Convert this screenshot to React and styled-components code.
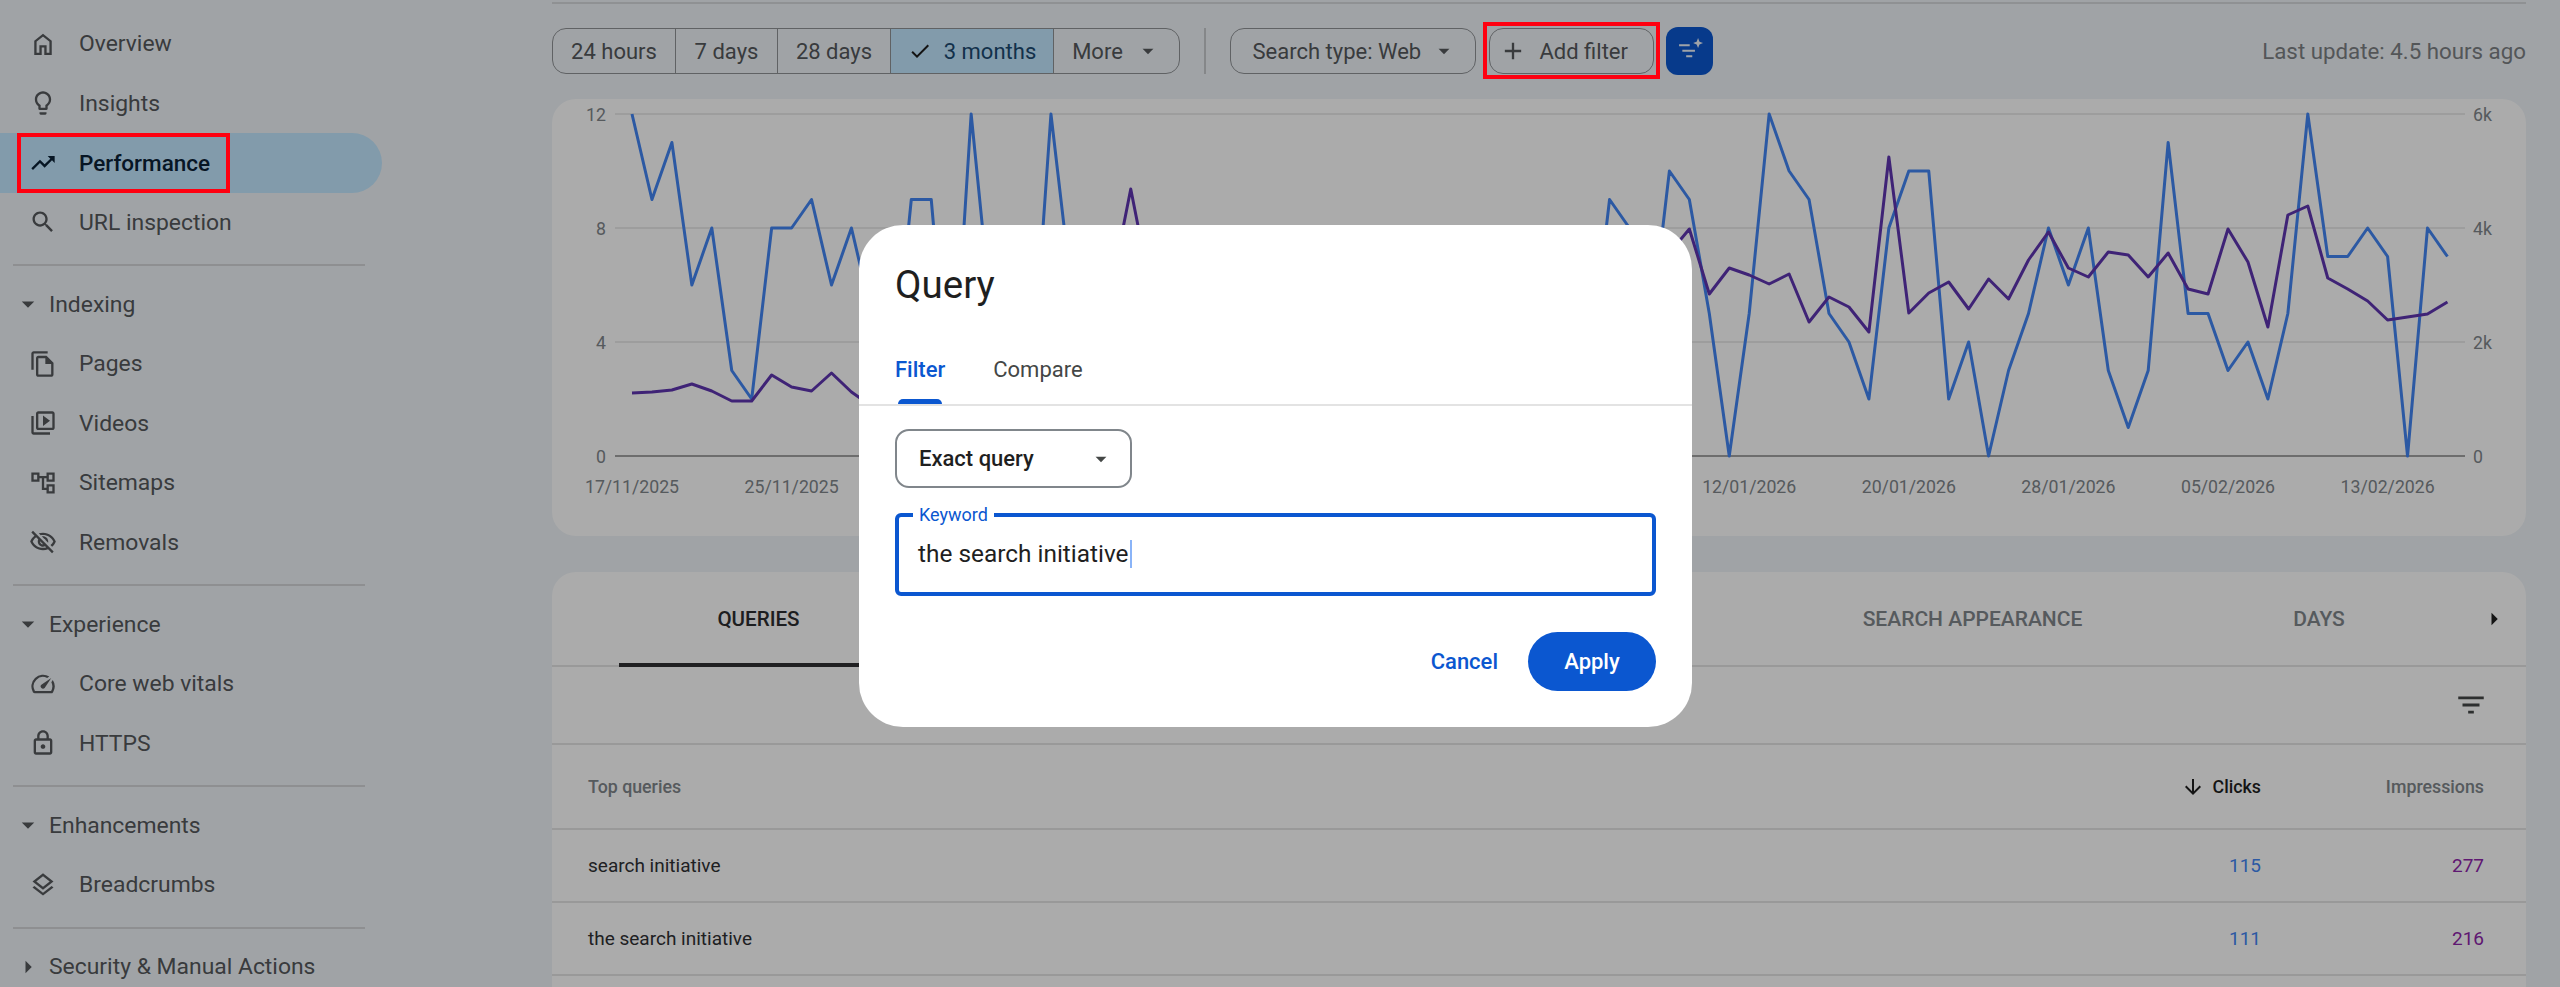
import React from 'react';
import styled, { createGlobalStyle } from 'styled-components';

const GlobalStyle = createGlobalStyle`
  html, body {
    margin: 0;
    padding: 0;
    height: 987px;
    overflow: hidden;
    background: #eff4f8;
    font-family: Roboto, "Noto Sans", sans-serif;
  }
  * {
    box-sizing: border-box;
  }
`;

const ICONS = {
  home: <path d="M5.5 20.5V9.6L12 4.4l6.5 5.2v10.9h-4.4V14H9.9v6.5z" fill="none" stroke="currentColor" strokeWidth="2" />,
  bulb: <path d="M9 21c0 .5.4 1 1 1h4c.6 0 1-.5 1-1v-1H9v1zm3-19C8.1 2 5 5.1 5 9c0 2.4 1.2 4.5 3 5.7V17c0 .5.4 1 1 1h6c.6 0 1-.5 1-1v-2.3c1.8-1.3 3-3.4 3-5.7 0-3.9-3.1-7-7-7zm2.9 11.1l-.9.6V16h-4v-2.3l-.9-.6C7.8 12.2 7 10.6 7 9c0-2.8 2.2-5 5-5s5 2.2 5 5c0 1.6-.8 3.2-2.1 4.1z" />,
  trend: <path d="M16 6l2.29 2.29-4.88 4.88-4-4L2 16.59 3.41 18l6-6 4 4 6.3-6.29L22 12V6z" />,
  search: <path d="M15.5 14h-.79l-.28-.27C15.41 12.59 16 11.11 16 9.5 16 5.91 13.09 3 9.5 3S3 5.91 3 9.5 5.91 16 9.5 16c1.61 0 3.09-.59 4.23-1.57l.27.28v.79l5 4.99L20.49 19l-4.99-5zm-6 0C7.01 14 5 11.99 5 9.5S7.01 5 9.5 5 14 7.01 14 9.5 11.99 14 9.5 14z" />,
  pages: <path d="M16 1H4c-1.1 0-2 .9-2 2v14h2V3h12V1zm-1 4H8c-1.1 0-1.99.9-1.99 2L6 21c0 1.1.89 2 1.99 2H19c1.1 0 2-.9 2-2V11l-6-6zM8 21V7h6v5h5v9H8z" />,
  videos: <path d="M4 6H2v14c0 1.1.9 2 2 2h14v-2H4V6zm16-4H8c-1.1 0-2 .9-2 2v12c0 1.1.9 2 2 2h12c1.1 0 2-.9 2-2V4c0-1.1-.9-2-2-2zm0 14H8V4h12v12zM12 5.5v9l6-4.5z" />,
  sitemap: <path d="M22 11V3h-7v3H9V3H2v8h7V8h2v10h4v3h7v-8h-7v3h-2V8h2v3h7zM7 9H4V5h3v4zm10 6h3v4h-3v-4zm0-10h3v4h-3V5z" />,
  eyeOff: <path d="M12 6c3.79 0 7.17 2.13 8.82 5.5-.59 1.22-1.42 2.27-2.41 3.12l1.41 1.41c1.39-1.23 2.49-2.77 3.18-4.53C21.27 7.11 17 4 12 4c-1.27 0-2.49.2-3.64.57l1.65 1.65C10.66 6.09 11.32 6 12 6zm-1.07 1.14L13 9.21c.57.25 1.03.71 1.28 1.28l2.07 2.07c.08-.34.14-.7.14-1.07C16.5 9.01 14.48 7 12 7c-.37 0-.72.05-1.07.14zM2.01 3.87l2.68 2.68C3.06 7.83 1.77 9.53 1 11.5 2.73 15.89 7 19 12 19c1.52 0 2.98-.29 4.32-.82l3.42 3.42 1.41-1.41L3.42 2.45 2.01 3.87zm7.5 7.5l2.61 2.61c-.04.01-.08.02-.12.02-1.38 0-2.5-1.12-2.5-2.5 0-.05.01-.08.01-.13zm-3.4-3.4l1.75 1.75c-.23.55-.36 1.15-.36 1.78 0 2.48 2.02 4.5 4.5 4.5.63 0 1.23-.13 1.77-.36l.98.98c-.88.24-1.8.38-2.75.38-3.79 0-7.17-2.13-8.82-5.5.7-1.43 1.72-2.61 2.93-3.53z" />,
  speed: <path d="M20.38 8.57l-1.23 1.85a8 8 0 0 1-.22 7.58H5.07A8 8 0 0 1 15.58 6.85l1.85-1.23A10 10 0 0 0 3.35 19a2 2 0 0 0 1.72 1h13.85a2 2 0 0 0 1.74-1 10 10 0 0 0-.27-10.44zm-9.79 6.84a2 2 0 0 0 2.83 0l5.66-8.49-8.49 5.66a2 2 0 0 0 0 2.83z" />,
  lock: <path d="M18 8h-1V6c0-2.76-2.24-5-5-5S7 3.24 7 6v2H6c-1.1 0-2 .9-2 2v10c0 1.1.9 2 2 2h12c1.1 0 2-.9 2-2V10c0-1.1-.9-2-2-2zM9 6c0-1.66 1.34-3 3-3s3 1.34 3 3v2H9V6zm9 14H6V10h12v10zm-6-3c1.1 0 2-.9 2-2s-.9-2-2-2-2 .9-2 2 .9 2 2 2z" />,
  layers: <path d="M11.99 18.54l-7.37-5.73L3 14.07l9 7 9-7-1.63-1.27zM12 16l7.36-5.73L21 9l-9-7-9 7 1.63 1.27L12 16zm0-11.47L17.74 9 12 13.47 6.26 9 12 4.53z" />,
  drop: <path d="M7 10l5 5 5-5z" />,
  right: <path d="M10 17l5-5-5-5v10z" />,
  check: <path d="M9 16.17L4.83 12l-1.41 1.41L9 19 21 7l-1.41-1.41z" />,
  plus: <path d="M19 13h-6v6h-2v-6H5v-2h6V5h2v6h6v2z" />,
  filter: <path d="M10 18h4v-2h-4v2zM3 6v2h18V6H3zm3 7h12v-2H6v2z" />,
  down: <path d="M20 12l-1.41-1.41L13 16.17V4h-2v12.17l-5.58-5.59L4 12l8 8 8-8z" />,
  spark: <path d="M5 7.3h7.5v1.4H5zM7.3 11.1h8.9v1.4H7.3zM10 15h4.3v1.4H10zM18.4 2.9l1 2.5 2.5 1-2.5 1-1 2.5-1-2.5-2.5-1 2.5-1z" />,
};

function Icon({ name, size = 28 }) {
  return (
    <svg width={size} height={size} viewBox="0 0 24 24" fill="currentColor" style={{ flex: 'none' }}>
      {ICONS[name]}
    </svg>
  );
}

const NAV = [
  {
    items: [
      { icon: 'home', label: 'Overview' },
      { icon: 'bulb', label: 'Insights' },
      { icon: 'trend', label: 'Performance', active: true },
      { icon: 'search', label: 'URL inspection' },
    ],
  },
  {
    title: 'Indexing',
    items: [
      { icon: 'pages', label: 'Pages' },
      { icon: 'videos', label: 'Videos' },
      { icon: 'sitemap', label: 'Sitemaps' },
      { icon: 'eyeOff', label: 'Removals' },
    ],
  },
  {
    title: 'Experience',
    items: [
      { icon: 'speed', label: 'Core web vitals' },
      { icon: 'lock', label: 'HTTPS' },
    ],
  },
  {
    title: 'Enhancements',
    items: [{ icon: 'layers', label: 'Breadcrumbs' }],
  },
  { title: 'Security & Manual Actions', collapsed: true, items: [] },
];

// clicks per day, one point per day from 17/11/2025
const CLICKS = [
  12, 9, 11, 6, 8, 3, 2, 8, 8, 9, 6, 8, 5, 2, 9, 9, 1, 12, 5, 4, 2, 12, 6,
  3, 5, 2, 7, 4, 6, 3, 5, 1, 6, 8, 2, 4, 7, 3, 5, 2, 6, 4, 8, 3, 5, 2, 7, 4, 3,
  9, 8, 4, 10, 9, 5, 0, 5, 12, 10, 9, 5, 4, 2, 8, 10, 10, 2, 4, 0, 3, 5, 8, 6, 8,
  3, 1, 3, 11, 5, 5, 3, 4, 2, 5, 12, 7, 7, 8, 7, 0, 8, 7,
];

// impressions, as height above the baseline
const IMPRESSIONS = [
  63, 64, 66, 72, 65, 55, 55, 81, 69, 65, 83, 64, 50, 60, 70, 60, 55, 80, 70, 75, 60, 70, 65, 60,
  166, 267, 166,
  150, 140, 160, 130, 170, 150, 140, 160, 180, 150, 130, 170, 160, 140, 150, 170, 130, 160, 150, 140, 180, 160, 150, 170, 155,
  203, 227, 162, 188, 181, 172, 182, 134, 159, 149, 124, 299, 143, 163, 174, 147, 177, 157, 196, 224, 188, 179, 204, 201,
  179, 203, 167, 162, 227, 194, 129, 241, 250, 178, 167, 155, 136, 139, 142, 154,
];

const X0 = 632;
const STEP = 19.95;
const BASE = 456;
const UNIT = 28.5;

const clicksPoints = CLICKS.map((v, i) => `${X0 + i * STEP},${BASE - v * UNIT}`).join(' ');
const impressionsPoints = IMPRESSIONS.map((h, i) => `${X0 + i * STEP},${BASE - h}`).join(' ');

const GRID = [
  { left: '12', right: '6k', y: 114 },
  { left: '8', right: '4k', y: 228 },
  { left: '4', right: '2k', y: 342 },
  { left: '0', right: '0', y: 456 },
];

const DATES = [
  '17/11/2025', '25/11/2025', '03/12/2025', '11/12/2025', '19/12/2025', '27/12/2025',
  '04/01/2026', '12/01/2026', '20/01/2026', '28/01/2026', '05/02/2026', '13/02/2026',
];

const PERIODS = [
  { label: '24 hours', width: 122 },
  { label: '7 days', width: 102 },
  { label: '28 days', width: 113 },
  { label: '3 months', width: 163, selected: true },
  { label: 'More', width: 126, menu: true },
];

const TABS = [
  { label: 'QUERIES', width: 279, active: true },
  { label: 'PAGES', width: 289 },
  { label: 'COUNTRIES', width: 289 },
  { label: 'DEVICES', width: 290 },
  { label: 'SEARCH APPEARANCE', width: 413 },
  { label: 'DAYS', width: 280 },
];

const ROWS = [
  { query: 'search initiative', clicks: 115, impressions: 277 },
  { query: 'the search initiative', clicks: 111, impressions: 216 },
];

export default function App() {
  return (
    <>
      <GlobalStyle />
      <Page>
        <Sidebar>
          {NAV.map((group, g) => (
            <React.Fragment key={g}>
              {g > 0 && <NavDivider />}
              {group.title && (
                <GroupTitle>
                  <Caret>
                    <Icon name={group.collapsed ? 'right' : 'drop'} size={30} />
                  </Caret>
                  {group.title}
                </GroupTitle>
              )}
              {group.items.map((item) => (
                <NavItem key={item.label} $active={item.active}>
                  <NavIcon>
                    <Icon name={item.icon} />
                  </NavIcon>
                  {item.label}
                  {item.active && <NavHighlight />}
                </NavItem>
              ))}
            </React.Fragment>
          ))}
        </Sidebar>

        <Main>
          <TopLine />
          <Toolbar>
            <PeriodGroup>
              {PERIODS.map((p) => (
                <Period key={p.label} $selected={p.selected} $width={p.width}>
                  {p.selected && <Icon name="check" size={24} />}
                  {p.label}
                  {p.menu && <Icon name="drop" size={26} />}
                </Period>
              ))}
            </PeriodGroup>
            <ToolbarDivider />
            <Chip $width={246}>
              Search type: Web
              <Icon name="drop" size={26} />
            </Chip>
            <AddFilter>
              <Icon name="plus" size={28} />
              Add filter
            </AddFilter>
            <AssistButton>
              <Icon name="spark" size={34} />
            </AssistButton>
            <LastUpdate>Last update: 4.5 hours ago</LastUpdate>
          </Toolbar>

          <ChartCard>
            <svg width="1974" height="437" viewBox="552 99 1974 437">
              {GRID.map((g) => (
                <g key={g.y}>
                  <line x1="615" x2="2465" y1={g.y} y2={g.y} stroke={g.y === BASE ? '#a3a3a3' : '#ebebeb'} strokeWidth="2" />
                  <AxisLabel x="606" y={g.y + 7} textAnchor="end">{g.left}</AxisLabel>
                  <AxisLabel x="2473" y={g.y + 7}>{g.right}</AxisLabel>
                </g>
              ))}
              {DATES.map((d, i) => (
                <AxisLabel key={d} x={X0 + i * 8 * STEP} y="493" textAnchor="middle">{d}</AxisLabel>
              ))}
              <polyline points={clicksPoints} fill="none" stroke="#4285f4" strokeWidth="3" strokeLinejoin="round" />
              <polyline points={impressionsPoints} fill="none" stroke="#5e35b1" strokeWidth="3" strokeLinejoin="round" />
            </svg>
          </ChartCard>

          <TableCard>
            <TabBar>
              {TABS.map((t) => (
                <TableTab key={t.label} $active={t.active} $width={t.width}>{t.label}</TableTab>
              ))}
              <TabScroll>
                <Icon name="right" size={30} />
              </TabScroll>
            </TabBar>
            <FilterRow>
              <Icon name="filter" size={34} />
            </FilterRow>
            <HeadRow>
              <QueryCell>Top queries</QueryCell>
              <ClicksHead>
                <Icon name="down" size={24} />
                Clicks
              </ClicksHead>
              <ImpressionsHead>Impressions</ImpressionsHead>
            </HeadRow>
            {ROWS.map((r) => (
              <Row key={r.query}>
                <QueryCell>{r.query}</QueryCell>
                <NumCell $color="#4285f4">{r.clicks}</NumCell>
                <NumCell $color="#8e24aa" $wide>{r.impressions}</NumCell>
              </Row>
            ))}
          </TableCard>
        </Main>
      </Page>

      <Scrim>
        <Modal>
          <ModalTitle>Query</ModalTitle>
          <ModalTabs>
            <ModalTab $active>Filter</ModalTab>
            <ModalTab>Compare</ModalTab>
          </ModalTabs>
          <ModalBody>
            <Select>
              Exact query
              <Icon name="drop" size={26} />
            </Select>
            <Field>
              <FieldLabel>Keyword</FieldLabel>
              <FieldValue>the search initiative</FieldValue>
              <FieldCaret />
            </Field>
            <Actions>
              <TextButton>Cancel</TextButton>
              <PrimaryButton>Apply</PrimaryButton>
            </Actions>
          </ModalBody>
        </Modal>
      </Scrim>
    </>
  );
}

const Page = styled.div`
  display: grid;
  grid-template-columns: 552px 1fr;
  width: 2560px;
  height: 987px;
  overflow: hidden;
`;

const Sidebar = styled.nav`
  padding-top: 14px;
  color: #55585c;
  font-size: 22.9px;
`;

const NavItem = styled.div`
  display: flex;
  align-items: center;
  width: 382px;
  height: 59.5px;
  padding-left: 29px;
  border-radius: 0 30px 30px 0;
  background: ${(p) => (p.$active ? '#c2e7ff' : 'transparent')};
  color: ${(p) => (p.$active ? '#0b2236' : 'inherit')};
  font-size: ${(p) => (p.$active ? '22.5px' : 'inherit')};
  font-weight: ${(p) => (p.$active ? 500 : 400)};
`;

const NavIcon = styled.span`
  display: flex;
  justify-content: center;
  width: 28px;
  margin-right: 22px;
`;

const NavHighlight = styled.span`
  position: absolute;
  top: 133px;
  left: 17px;
  width: 213px;
  height: 60px;
  border: 4px solid #ff0010;
  z-index: 20;
`;

const NavDivider = styled.div`
  width: 352px;
  height: 2px;
  margin: 12px 0 8.5px 13px;
  background: #d4d6d9;
`;

const GroupTitle = styled.div`
  display: flex;
  align-items: center;
  height: 59.5px;
  padding-left: 13px;
`;

const Caret = styled.span`
  display: flex;
  justify-content: center;
  width: 30px;
  margin-right: 6px;
`;

const Main = styled.main`
  padding-right: 34px;
  min-width: 0;
`;

const TopLine = styled.div`
  height: 2px;
  margin-top: 2px;
  background: #d6d9dc;
`;

const Toolbar = styled.div`
  display: flex;
  align-items: center;
  height: 46px;
  margin-top: 24px;
  color: #55585c;
  font-size: 22px;
`;

const PeriodGroup = styled.div`
  display: flex;
  height: 46px;
  border: 1.5px solid #8f9296;
  border-radius: 14px;
  overflow: hidden;
`;

const Period = styled.div`
  display: flex;
  align-items: center;
  justify-content: center;
  gap: 12px;
  width: ${(p) => p.$width}px;
  background: ${(p) => (p.$selected ? '#c2e7ff' : 'transparent')};
  color: ${(p) => (p.$selected ? '#1b4a70' : 'inherit')};
  border-left: 1.5px solid #8f9296;
  &:first-child {
    border-left: 0;
  }
  svg {
    color: ${(p) => (p.$selected ? '#1f1f1f' : 'inherit')};
  }
`;

const ToolbarDivider = styled.div`
  width: 1.5px;
  height: 46px;
  margin: 0 24px;
  background: #c6c9cc;
`;

const Chip = styled.div`
  display: flex;
  align-items: center;
  gap: 10px;
  width: ${(p) => p.$width}px;
  height: 46px;
  padding-left: 22px;
  border: 1.5px solid #8f9296;
  border-radius: 14px;
`;

const AddFilter = styled(Chip)`
  position: relative;
  gap: 13px;
  width: 165px;
  margin-left: 13px;
  padding-left: 9px;
  &::after {
    content: '';
    position: absolute;
    inset: -7px -7px -6px -7px;
    border: 4px solid #ff0010;
    z-index: 20;
  }
`;

const AssistButton = styled.div`
  display: flex;
  align-items: center;
  justify-content: center;
  width: 47px;
  height: 48px;
  margin-left: 12px;
  border-radius: 12px;
  background: #0b57d0;
  color: #eef3fb;
`;

const LastUpdate = styled.div`
  margin-left: auto;
  color: #7d8084;
  font-size: 22.3px;
`;

const ChartCard = styled.section`
  height: 437px;
  margin-top: 25px;
  border-radius: 24px;
  background: #fff;
  svg {
    display: block;
  }
`;

const AxisLabel = styled.text`
  font-family: Roboto, sans-serif;
  font-size: 17.7px;
  fill: #80868b;
`;

const TableCard = styled.section`
  height: 500px;
  margin-top: 36px;
  border-radius: 24px 24px 0 0;
  background: #fff;
  overflow: hidden;
`;

const TabBar = styled.div`
  position: relative;
  display: flex;
  height: 95px;
  padding-left: 67px;
  border-bottom: 2px solid #e4e4e4;
`;

const TableTab = styled.div`
  display: flex;
  align-items: center;
  justify-content: center;
  flex: none;
  width: ${(p) => p.$width}px;
  height: 95px;
  padding-top: 3px;
  border-bottom: 4px solid ${(p) => (p.$active ? '#303134' : 'transparent')};
  color: ${(p) => (p.$active ? '#2c2d30' : '#80868b')};
  font-size: ${(p) => (p.$active ? 20.6 : 21)}px;
  font-weight: 500;
`;

const TabScroll = styled.div`
  position: absolute;
  top: 32px;
  right: 17px;
  color: #1f1f1f;
`;

const FilterRow = styled.div`
  display: flex;
  align-items: center;
  justify-content: flex-end;
  height: 78px;
  padding-right: 38px;
  border-bottom: 2px solid #e4e4e4;
  color: #444746;
`;

const Row = styled.div`
  display: flex;
  align-items: center;
  height: 73px;
  padding: 0 42px 0 36px;
  border-bottom: 2px solid #e4e4e4;
  font-size: 19px;
  color: #2f3033;
`;

const HeadRow = styled(Row)`
  height: 85px;
  font-size: 17.8px;
  font-weight: 500;
  color: #80868b;
`;

const QueryCell = styled.div`
  flex: 1;
`;

const ClicksHead = styled.div`
  display: flex;
  align-items: center;
  gap: 8px;
  color: #1f1f1f;
`;

const ImpressionsHead = styled.div`
  width: 223px;
  text-align: right;
`;

const NumCell = styled.div`
  width: ${(p) => (p.$wide ? '223px' : 'auto')};
  text-align: right;
  color: ${(p) => p.$color};
`;

const Scrim = styled.div`
  position: fixed;
  inset: 0;
  z-index: 10;
  padding: 225px 0 0 859px;
  background: rgba(0, 0, 0, 0.33);
`;

const Modal = styled.div`
  width: 833px;
  height: 502px;
  border-radius: 44px;
  background: #fff;
  color: #1f1f1f;
`;

const ModalTitle = styled.div`
  padding: 38px 36px 0;
  font-size: 38.5px;
  line-height: 44px;
`;

const ModalTabs = styled.div`
  display: flex;
  gap: 48px;
  height: 70px;
  margin-top: 29px;
  padding: 0 36px;
  border-bottom: 2px solid #e3e3e3;
`;

const ModalTab = styled.div`
  position: relative;
  padding-top: 21px;
  font-size: 22px;
  font-weight: ${(p) => (p.$active ? 500 : 400)};
  color: ${(p) => (p.$active ? '#0b57d0' : '#444746')};
  ${(p) =>
    p.$active &&
    `
    &::after {
      content: '';
      position: absolute;
      left: 3px;
      right: 3px;
      bottom: 0;
      height: 5px;
      border-radius: 5px 5px 0 0;
      background: #0b57d0;
    }
  `}
`;

const ModalBody = styled.div`
  padding: 23px 36px 0;
`;

const Select = styled.div`
  display: flex;
  align-items: center;
  justify-content: space-between;
  width: 237px;
  height: 59px;
  padding: 0 16px 0 22px;
  border: 2px solid #80868b;
  border-radius: 14px;
  font-size: 22px;
  font-weight: 500;
  svg {
    color: #444746;
  }
`;

const Field = styled.div`
  position: relative;
  display: flex;
  align-items: center;
  width: 761px;
  height: 83px;
  margin-top: 25px;
  padding: 0 0 2px 19px;
  border: 4px solid #0b57d0;
  border-radius: 6px;
`;

const FieldLabel = styled.span`
  position: absolute;
  top: -13px;
  left: 14px;
  padding: 0 6px;
  background: #fff;
  color: #0b57d0;
  font-size: 18px;
  line-height: 22px;
`;

const FieldValue = styled.span`
  font-size: 24.4px;
`;

const FieldCaret = styled.span`
  width: 2px;
  height: 28px;
  margin-left: 1px;
  background: #8ab4f8;
`;

const Actions = styled.div`
  display: flex;
  align-items: center;
  justify-content: flex-end;
  gap: 30px;
  margin-top: 36px;
`;

const TextButton = styled.div`
  color: #0b57d0;
  font-size: 22px;
  font-weight: 500;
`;

const PrimaryButton = styled.div`
  display: flex;
  align-items: center;
  justify-content: center;
  width: 128px;
  height: 59px;
  border-radius: 30px;
  background: #0b57d0;
  color: #fff;
  font-size: 22px;
  font-weight: 500;
`;
